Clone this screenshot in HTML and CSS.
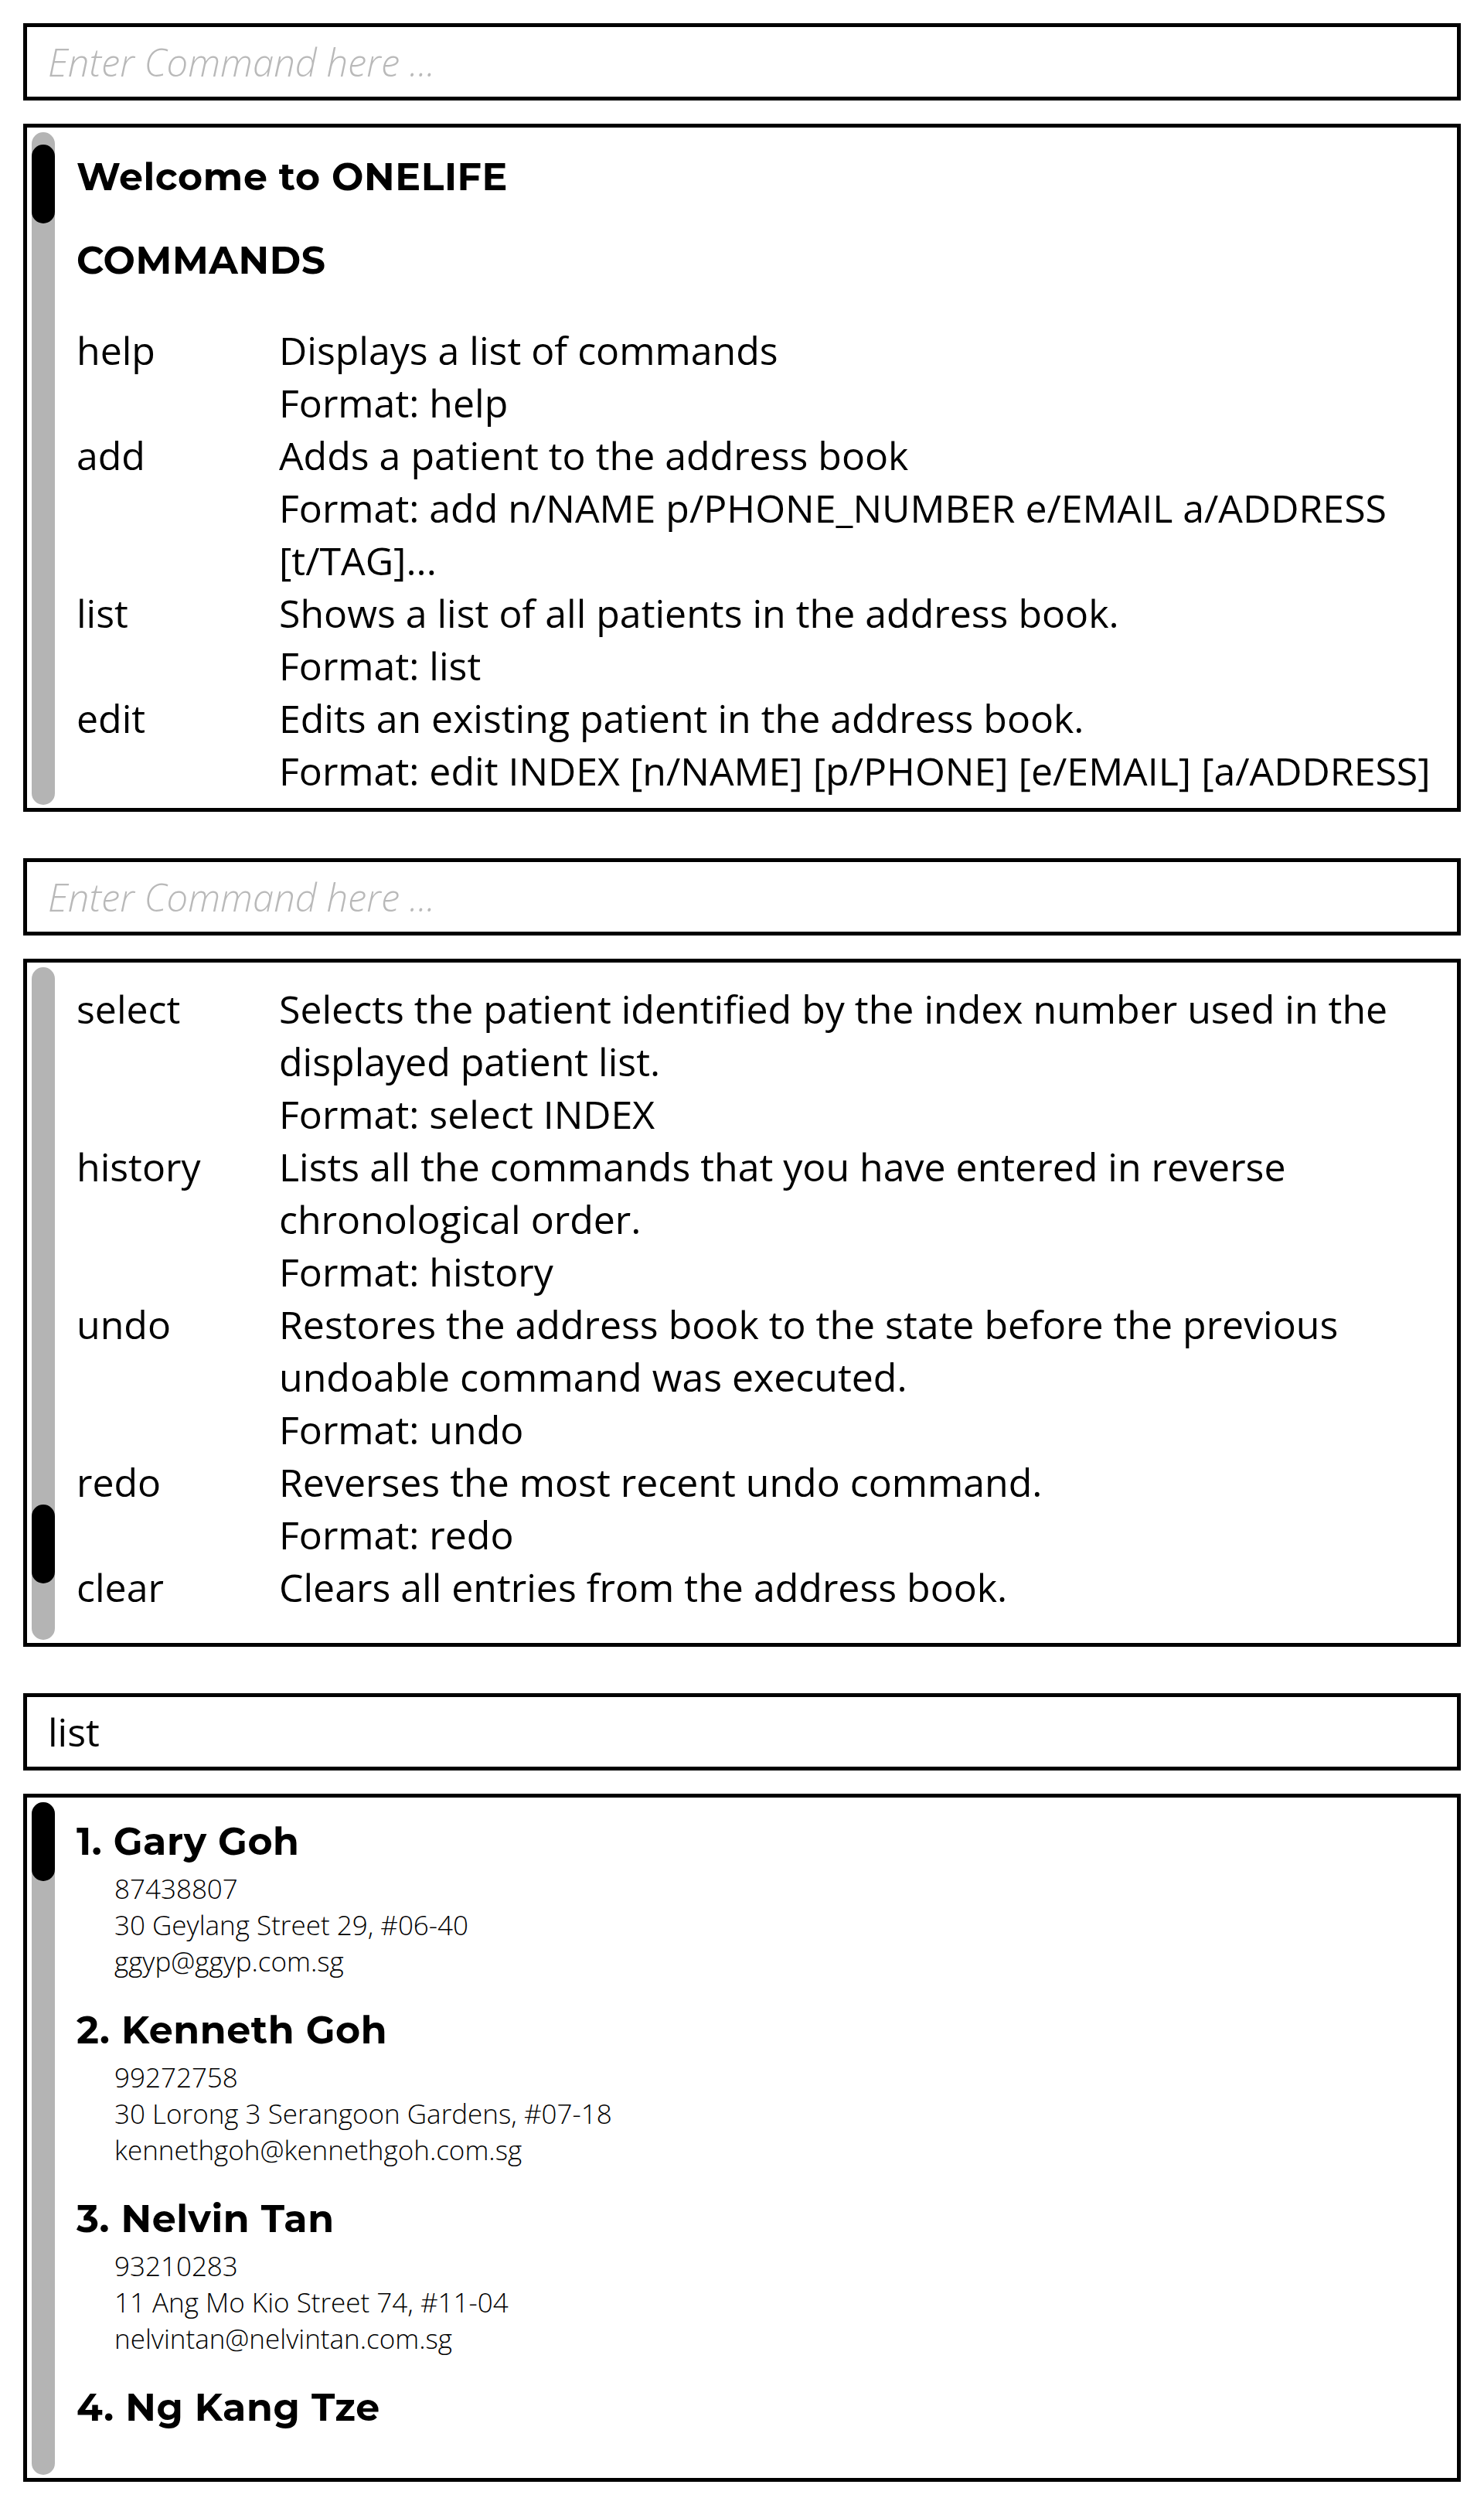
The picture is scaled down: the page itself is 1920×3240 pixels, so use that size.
FILE: index.html
```html
<!DOCTYPE html>
<html lang="en">
<head>
<meta charset="utf-8">
<title>ONELIFE</title>
<link rel="stylesheet" href="styles.css">
</head>
<body>
<section class="section">
  <div class="cmd"><span class="placeholder">Enter Command here ...</span></div>
  <div class="result">
    <div class="track"><div class="thumb thumb-b"></div></div>
    <div class="content content-b">
      <h1 class="heading">Welcome to ONELIFE</h1>
      <h2 class="heading heading-2">COMMANDS</h2>
      <div class="cmd-table">
        <div class="cmd-name">help</div>
        <div class="cmd-desc"><div>Displays a list of commands</div><div>Format: help</div></div>
        <div class="cmd-name">add</div>
        <div class="cmd-desc"><div>Adds a patient to the address book</div><div>Format: add n/NAME p/PHONE_NUMBER e/EMAIL a/ADDRESS</div><div>[t/TAG]...</div></div>
        <div class="cmd-name">list</div>
        <div class="cmd-desc"><div>Shows a list of all patients in the address book.</div><div>Format: list</div></div>
        <div class="cmd-name">edit</div>
        <div class="cmd-desc"><div>Edits an existing patient in the address book.</div><div>Format: edit INDEX [n/NAME] [p/PHONE] [e/EMAIL] [a/ADDRESS]</div></div>
      </div>
    </div>
  </div>
</section>

<section class="section">
  <div class="cmd"><span class="placeholder">Enter Command here ...</span></div>
  <div class="result">
    <div class="track"><div class="thumb thumb-d"></div></div>
    <div class="content content-d">
      <div class="cmd-table">
        <div class="cmd-name">select</div>
        <div class="cmd-desc"><div>Selects the patient identified by the index number used in the</div><div>displayed patient list.</div><div>Format: select INDEX</div></div>
        <div class="cmd-name">history</div>
        <div class="cmd-desc"><div>Lists all the commands that you have entered in reverse</div><div>chronological order.</div><div>Format: history</div></div>
        <div class="cmd-name">undo</div>
        <div class="cmd-desc"><div>Restores the address book to the state before the previous</div><div>undoable command was executed.</div><div>Format: undo</div></div>
        <div class="cmd-name">redo</div>
        <div class="cmd-desc"><div>Reverses the most recent undo command.</div><div>Format: redo</div></div>
        <div class="cmd-name">clear</div>
        <div class="cmd-desc"><div>Clears all entries from the address book.</div></div>
      </div>
    </div>
  </div>
</section>

<section class="section">
  <div class="cmd"><span class="typed">list</span></div>
  <div class="result">
    <div class="track"><div class="thumb thumb-f"></div></div>
    <div class="content content-f">
      <div class="card">
        <div class="name">1. Gary Goh</div>
        <div class="details"><div>87438807</div><div>30 Geylang Street 29, #06-40</div><div>ggyp@ggyp.com.sg</div></div>
      </div>
      <div class="card">
        <div class="name">2. Kenneth Goh</div>
        <div class="details"><div>99272758</div><div>30 Lorong 3 Serangoon Gardens, #07-18</div><div>kennethgoh@kennethgoh.com.sg</div></div>
      </div>
      <div class="card">
        <div class="name">3. Nelvin Tan</div>
        <div class="details"><div>93210283</div><div>11 Ang Mo Kio Street 74, #11-04</div><div>nelvintan@nelvintan.com.sg</div></div>
      </div>
      <div class="card">
        <div class="name">4. Ng Kang Tze</div>
      </div>
    </div>
  </div>
</section>
</body>
</html>
```

FILE: styles.css
```css
* { box-sizing: border-box; }

html, body {
  margin: 0;
  padding: 0;
  background: #ffffff;
}

body {
  width: 1920px;
  font-family: "Open Sans", "Liberation Sans", sans-serif;
  color: #000;
}

.section {
  height: 1080px;
  padding: 30px 30px;
  display: flex;
  flex-direction: column;
  gap: 30px;
}

.cmd {
  height: 100px;
  flex-shrink: 0;
  border: 5px solid #000;
  display: flex;
  align-items: center;
  padding-left: 27px;
  font-size: 50px;
}

.placeholder {
  font-style: italic;
  font-weight: 300;
  font-size: 49px;
  color: #b9b9b9;
}

.typed {
  font-weight: 400;
  color: #000;
}

.result {
  height: 890px;
  flex-shrink: 0;
  border: 5px solid #000;
  display: flex;
  overflow: hidden;
}

.track {
  position: relative;
  width: 30px;
  flex-shrink: 0;
  margin: 6px 0 4px 6px;
  background: #b4b4b4;
  border-radius: 15px;
}

.thumb {
  position: absolute;
  left: 0;
  right: 0;
  height: 102px;
  background: #000;
  border-radius: 15px;
}

.thumb-b { top: 16px; }
.thumb-d { top: 695px; }
.thumb-f { top: 0; }

.content {
  flex: 1;
  padding-left: 28px;
  overflow: hidden;
}

.content-b { padding-top: 35px; }
.content-d { padding-top: 26px; }
.content-f { padding-top: 28px; }

.heading {
  margin: 0;
  font-family: "Montserrat", Inter, "DejaVu Sans", sans-serif;
  font-weight: 700;
  font-size: 49px;
  letter-spacing: 0.6px;
  line-height: 58px;
}

.heading-2 {
  margin-top: 50px;
}

.cmd-table {
  display: grid;
  grid-template-columns: 262px 1fr;
  font-size: 50px;
  white-space: nowrap;
}

.content-b .cmd-table {
  margin-top: 53px;
}

.card {
  height: 244px;
}

.name {
  font-family: "Montserrat", Inter, "DejaVu Sans", sans-serif;
  font-weight: 700;
  font-size: 49px;
  letter-spacing: 0.6px;
  line-height: 58px;
}

.details {
  margin-top: 8px;
  padding-left: 49px;
  font-size: 35px;
  font-weight: 300;
  white-space: nowrap;
}
```
